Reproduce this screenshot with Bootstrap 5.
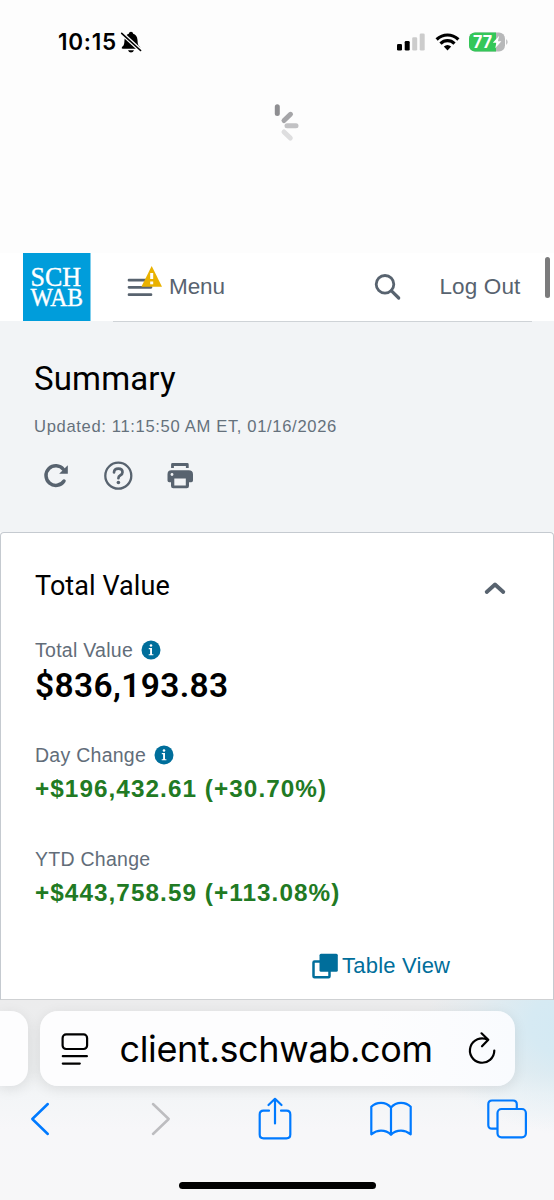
<!DOCTYPE html>
<html lang="en">
<head>
<meta charset="utf-8">
<meta name="viewport" content="width=device-width, initial-scale=1">
<title>Summary</title>
<link href="https://cdn.jsdelivr.net/npm/bootstrap@5.3.0/dist/css/bootstrap.min.css" rel="stylesheet">
<style>
  :root { --ink:#58636f; --link:#006e9b; --gain:#217a23; --ios:#007aff; }
  body { font-family:"Liberation Sans",Arial,sans-serif; color:#000; background:#fdfdfd; width:554px; height:1200px; overflow:hidden; }
  svg { display:block; flex:none; overflow:visible; }
  .status-bar { height:84px; padding:0 45px 0 58px; }
  .clock { font:600 22.5px/26px Inter,sans-serif; letter-spacing:.75px; }
  .pull-area { height:169px; padding:20px 0 0 273px; }
  .site-header { height:68px; background:#fff; padding-left:23px; position:relative; }
  .header-tools { margin-left:22px; width:419px; height:69px; border-bottom:1.5px solid #cfd3d7; color:var(--ink); font-size:22.5px; line-height:28px; padding:0 11px 1px 14px; }
  .scroll-thumb { position:absolute; right:4px; top:4px; width:5px; height:41px; border-radius:3px; background:#7b7b7c; }
  .summary-head { height:211px; background:#f2f4f6; padding:38px 34px 0; }
  .page-title { font:400 33px/40px Roboto,sans-serif; letter-spacing:.15px; }
  .updated { font-size:16.6px; line-height:20px; letter-spacing:.65px; color:#65717c; margin-top:18px; }
  .action-row { margin-top:19px; height:40px; padding-left:7px; gap:32px; color:var(--ink); }
  .value-card { height:468px; border:1.5px solid #c5cad0; border-bottom:1px solid #cfd1d3; border-radius:4px 4px 0 0; padding:37px 33px 0 34px; background:#fff; }
  .card-heading { font:400 27px/32px Roboto,sans-serif; letter-spacing:.07px; }
  .field-label { font-size:19.5px; line-height:24px; letter-spacing:.27px; color:#626d79; gap:8px; }
  .amount { font:600 33.5px/40px Roboto,sans-serif; letter-spacing:.35px; margin-top:4px; }
  .gain { font-size:24.3px; line-height:30px; font-weight:700; letter-spacing:1.06px; color:var(--gain); margin-top:7px; }
  .table-link { margin:43px 0 0 277px; font-size:22px; line-height:30px; letter-spacing:.22px; color:var(--link); gap:3px; }
  .browser-bar { height:200px; padding-top:11px; background:radial-gradient(ellipse 150px 110px at 575px 25px,#d3e9f3 0,#d6eaf3 30%,rgba(214,234,243,.4) 65%,rgba(214,234,243,0) 100%),linear-gradient(#ececed 0,#eceeef 70px,#f3f5f7 95px,#f7f7f9 130px,#f7f7f8 100%); }
  .tab-pill { height:75px; background:#fdfdfe; box-shadow:0 3px 14px rgba(0,0,0,.09); }
  .tab-prev { width:28px; border-radius:0 17px 17px 0; }
  .tab-current { width:475px; margin-left:11.5px; border-radius:18px; padding:0 19px 0 21px; background:linear-gradient(90deg,#fdfdfe 70%,#f9fbfe); }
  .address { font:400 36px/44px Inter,sans-serif; letter-spacing:-.35px; }
  .tool-row { height:66px; padding-left:30px; color:var(--ios); }
  .home-bar { width:197px; height:7px; border-radius:4px; background:#000; margin:30px 0 0 179px; }
</style>
</head>
<body>
<div class="status-bar d-flex align-items-center justify-content-between">
  <div class="d-flex align-items-center">
    <span class="clock">10:15</span>
    <svg style="margin-left:3px" width="22" height="24" viewBox="0 0 22 24"><path d="M2 17C4.500 15.400 4.200 13 4.500 10 4.800 6.500 6.500 4.600 8.800 3.800 9 2.500 9.900 1.800 11 1.800S13 2.500 13.200 3.800C15.500 4.600 17.200 6.500 17.500 10 17.800 13 17.500 15.400 20 17Q21 18.800 19.200 18.800H2.800Q1 18.800 2 17ZM8 20.200H14Q13.200 22.600 11 22.600T8 20.200Z" fill="#000"/><path d="M2 3.500 20.600 20.500" stroke="#fdfdfd" stroke-width="4"/><path d="M1.700 3.300 20.600 20.500" stroke="#000" stroke-width="1.600" stroke-linecap="round"/></svg>
  </div>
  <div class="d-flex align-items-center">
    <svg width="28" height="18" viewBox="0 0 28 18"><rect x="0" y="11" width="5" height="6.500" rx="1.300"/><rect x="7.700" y="8" width="5" height="9.500" rx="1.300"/><g fill="#ccc"><rect x="15.200" y="4.300" width="5" height="13.200" rx="1.300"/><rect x="22.700" y=".5" width="5" height="17" rx="1.300"/></g></svg>
    <svg style="margin-left:10px" width="25" height="18" viewBox="0 0 25 18"><g fill="none" stroke="#000" stroke-width="3.200"><path d="M1.600 6.500Q6.500 2 12.500 2T23.400 6.500"/><path d="M5.500 10.600Q8.500 7.700 12.500 7.700T19.500 10.600"/></g><path d="M8.800 13.500Q12.500 10.500 16.200 13.500L12.500 17.600Z"/></svg>
    <svg style="margin-left:9px" width="40" height="20" viewBox="0 0 40 20"><defs><clipPath id="cell"><rect x="0" y=".5" width="36" height="19" rx="6"/></clipPath></defs><g clip-path="url(#cell)"><rect width="36" height="20" fill="#b7b8b9"/><rect width="27" height="20" fill="#34c759"/></g><path d="M37.200 7Q40 10 37.200 13Z" fill="#b7b8b9"/><text x="4" y="16" font-family="Inter,sans-serif" font-weight="700" font-size="17" textLength="19" lengthAdjust="spacingAndGlyphs" fill="#fff">77</text><path d="M30.200 3.800 23.800 10.800H27.400L26.200 16.200 32.400 9.200H28.900Z" fill="#fff"/></svg>
  </div>
</div>
<div class="pull-area">
  <svg width="28" height="40" viewBox="0 0 28 40" fill="none" stroke-width="5" stroke-linecap="round"><path d="M4.300 2.800V9.500" stroke="#8e8e91"/><path d="M11 16.500 17.500 10.300" stroke="#a5a5a8"/><path d="M14 21.800H23" stroke="#c2c2c4"/><path d="M11 28 17.300 34" stroke="#dededf"/></svg>
</div>
<header class="site-header d-flex">
  <svg width="67.500" height="68" viewBox="0 0 67.500 68"><rect width="67.500" height="68" fill="#009ddb"/><g fill="#fff" font-family="'Liberation Serif',serif" stroke="#fff" stroke-width=".4"><text x="7.500" y="32.500" font-size="27.500" textLength="50.500" lengthAdjust="spacingAndGlyphs">SCH</text><text x="7.500" y="52.500" font-size="25" textLength="52.500" lengthAdjust="spacingAndGlyphs">WAB</text></g></svg>
  <div class="header-tools d-flex align-items-center">
    <svg width="36" height="36" viewBox="0 0 36 36"><g stroke="currentColor" stroke-width="2.700" stroke-linecap="round"><path d="M2 11.200H24M2 18.300H24M2 25.700H24"/></g><path d="M24.700-3 35 17.800H14.400Z" fill="#e9b200"/><path d="M24.700 4V10" stroke="#fff" stroke-width="3"/><rect x="23.200" y="12.500" width="3" height="2.800" fill="#fff"/></svg>
    <span style="margin-left:6.500px;letter-spacing:-.1px">Menu</span>
    <svg class="ms-auto" width="28" height="28" viewBox="0 0 28 28" fill="none" stroke="currentColor" stroke-linecap="round"><circle cx="11" cy="11.300" r="8.800" stroke-width="2.800"/><path d="M17.500 17.800 24.700 25" stroke-width="3.200"/></svg>
    <span style="margin-left:37px;letter-spacing:.15px">Log Out</span>
  </div>
  <div class="scroll-thumb"></div>
</header>
<section class="summary-head">
  <h1 class="page-title mb-0">Summary</h1>
  <div class="updated">Updated: 11:15:50 AM ET, 01/16/2026</div>
  <div class="action-row d-flex align-items-center">
    <svg width="30" height="30" viewBox="0 0 30 30"><path d="M23 20A9.800 9.800 0 1 1 22.500 8.500" fill="none" stroke="currentColor" stroke-width="3.500" stroke-linecap="round"/><path d="M26.800 4.200V12.800H18.200Z" fill="currentColor"/></svg>
    <svg width="30" height="30" viewBox="0 0 30 30" fill="none" stroke="currentColor"><circle cx="15.300" cy="14.700" r="13" stroke-width="2.300"/><path d="M11 11.300Q11.300 7.700 15.300 7.700 19.500 7.700 19.500 11.200 19.500 13.200 17.400 14.300 15.400 15.400 15.400 17.200" stroke-width="2.700" stroke-linecap="round"/><circle cx="15.400" cy="21.500" r="1.800" fill="currentColor" stroke="none"/></svg>
    <svg width="30" height="30" viewBox="0 0 30 30"><path d="M7.500 7V3.500H22.300V7" fill="none" stroke="currentColor" stroke-width="2.800" stroke-linejoin="round"/><path d="M6.300 9.300H23.700Q28 9.300 28 13.500V19.500Q28 21.200 26.300 21.200H24V25Q24 27.300 21.700 27.300H8.300Q6 27.300 6 25V21.200H4.200Q2.500 21.200 2.500 19.500V13.500Q2.500 9.300 6.300 9.300Z" fill="currentColor"/><path d="M9.300 17.500H20.800V24.500H9.300Z" fill="#f2f4f6"/><circle cx="7" cy="13.500" r="1.400" fill="#f2f4f6"/></svg>
  </div>
</section>
<section class="value-card">
  <div class="d-flex align-items-center justify-content-between">
    <h2 class="card-heading mb-0">Total Value</h2>
    <svg style="margin-right:13px" width="24" height="16" viewBox="0 0 24 16" fill="none" stroke="#58636f" stroke-width="3.800" stroke-linecap="round" stroke-linejoin="round"><path d="M3.700 14 12 6.500 20.300 14"/></svg>
  </div>
  <div class="field-label d-flex align-items-center" style="margin-top:36px">Total Value
    <svg width="20" height="20" viewBox="0 0 20 20"><circle cx="10" cy="10" r="9.500" fill="#006e9b"/><g fill="#fff"><circle cx="10" cy="5.500" r="1.300"/><path d="M7.800 8.100H11V14.200H12.400V15.300H7.700V14.200H9.100V9.200H7.800Z"/></g></svg>
  </div>
  <div class="amount">$836,193.83</div>
  <div class="field-label d-flex align-items-center" style="margin-top:37px">Day Change
    <svg width="20" height="20" viewBox="0 0 20 20"><circle cx="10" cy="10" r="9.500" fill="#006e9b"/><g fill="#fff"><circle cx="10" cy="5.500" r="1.300"/><path d="M7.800 8.100H11V14.200H12.400V15.300H7.700V14.200H9.100V9.200H7.800Z"/></g></svg>
  </div>
  <div class="gain">+$196,432.61 (+30.70%)</div>
  <div class="field-label" style="margin-top:43px">YTD Change</div>
  <div class="gain">+$443,758.59 (+113.08%)</div>
  <div class="table-link d-flex align-items-center">
    <svg width="27" height="28" viewBox="0 0 27 28"><rect x="1.500" y="9.500" width="16" height="15.700" rx="1" fill="none" stroke="currentColor" stroke-width="2.500"/><rect x="7.500" y="1.700" width="18.300" height="18" rx="1.500" fill="currentColor"/></svg>
    <span>Table View</span>
  </div>
</section>
<footer class="browser-bar">
  <div class="d-flex">
    <div class="tab-pill tab-prev"></div>
    <div class="tab-pill tab-current d-flex align-items-center">
      <svg width="28" height="34" viewBox="0 0 28 34" fill="none" stroke="#000" stroke-width="2.200" stroke-linecap="round"><rect x="1.600" y="2.400" width="24.500" height="14.600" rx="3.500"/><path d="M1.800 24.200H25.900M1.800 31.600H18.800"/></svg>
      <span class="address" style="margin-left:31px">client.schwab.com</span>
      <svg class="ms-auto" width="28" height="34" viewBox="0 0 28 34" fill="none" stroke="#000" stroke-width="2.200" stroke-linecap="round" stroke-linejoin="round"><path d="M26.300 18.500A12.200 12.200 0 1 1 19.700 7.700M13.500 1.300 20.300 7.700 14 14.300"/></svg>
    </div>
  </div>
  <div class="tool-row d-flex align-items-center">
    <svg width="20" height="34" viewBox="0 0 20 34" fill="none" stroke="currentColor" stroke-width="2.500" stroke-linecap="round" stroke-linejoin="round"><path d="M17.800 2 2.300 17 17.800 32"/></svg>
    <svg style="margin-left:100px" width="20" height="34" viewBox="0 0 20 34" fill="none" stroke="#bdbdc0" stroke-width="2.500" stroke-linecap="round" stroke-linejoin="round"><path d="M3 2 18.700 17 3 32"/></svg>
    <svg style="margin-left:88px" width="34" height="44" viewBox="0 0 34 44" fill="none" stroke="currentColor" stroke-width="2.200" stroke-linecap="round" stroke-linejoin="round"><path d="M11 13.700H5.500Q1.700 13.700 1.700 17.500V37.500Q1.700 41.300 5.500 41.300H28.500Q32.300 41.300 32.300 37.500V17.500Q32.300 13.700 28.500 13.700H23M17 26.500V1.800M10.500 8 17 1.800 23.500 8"/></svg>
    <svg style="margin-left:78px" width="42" height="36" viewBox="0 0 42 36" fill="none" stroke="currentColor" stroke-width="2.200" stroke-linejoin="round"><path d="M21 6.500Q17 1.800 11 1.800 5 1.800 1.300 5.800V33.300Q6 29.700 11 29.700 17 29.700 21 33.800 25 29.700 31 29.700 36 29.700 40.700 33.300V5.800Q37 1.800 31 1.800 25 1.800 21 6.500ZM21 6.500V34.500"/></svg>
    <svg style="margin-left:75px" width="40" height="40" viewBox="0 0 40 40" fill="none" stroke="currentColor" stroke-width="2.200"><path d="M10.500 29.700H5Q1.300 29.700 1.300 26V5.300Q1.300 1.500 5 1.500H26Q29.800 1.500 29.800 5.300V10"/><rect x="10.500" y="10" width="28.400" height="28.300" rx="4"/></svg>
  </div>
  <div class="home-bar"></div>
</footer>
<script src="https://cdn.jsdelivr.net/npm/bootstrap@5.3.0/dist/js/bootstrap.bundle.min.js"></script>
</body>
</html>
